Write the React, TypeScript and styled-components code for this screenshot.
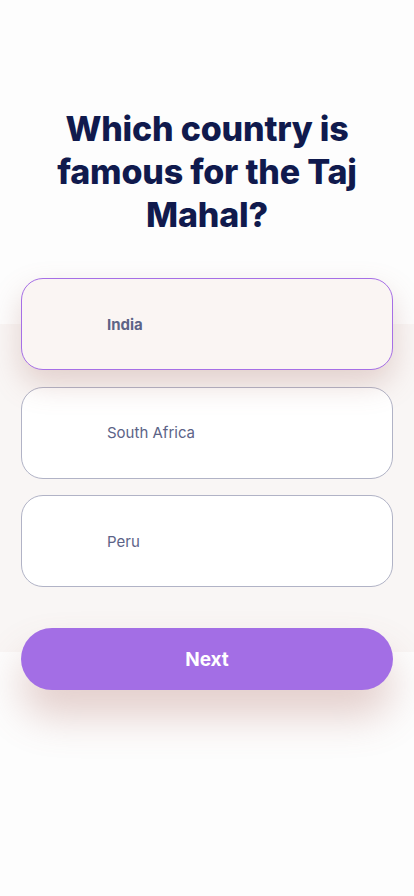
import React, { useState } from "react";
import styled, { createGlobalStyle } from "styled-components";

const Global = createGlobalStyle`
  html, body { margin: 0; padding: 0; }
  body {
    background: #fdfdfd;
    font-family: Inter, "Noto Sans", sans-serif;
    -webkit-font-smoothing: antialiased;
  }
`;

const Page = styled.div`
  min-height: 896px;
  box-sizing: border-box;
  background: linear-gradient(
    to bottom,
    #fdfdfd 0px,
    #fdfdfd 324px,
    #f9f6f5 324px,
    #f9f6f5 652px,
    #fdfdfd 652px
  );
  padding: 107px 21px 0;
  display: flex;
  flex-direction: column;
`;

const Question = styled.h1`
  margin: 0 20px;
  text-align: center;
  color: #101a4d;
  font-size: 34px;
  line-height: 43px;
  font-weight: 800;
  letter-spacing: -0.2px;
`;

const Options = styled.div`
  margin-top: 42px;
  display: flex;
  flex-direction: column;
  gap: 16.5px;
`;

const Option = styled.button<{ $selected?: boolean }>`
  all: unset;
  box-sizing: border-box;
  height: 92px;
  display: flex;
  align-items: center;
  padding-left: 85px;
  border-radius: 22px;
  border: 1px solid ${(p) => (p.$selected ? "#a66fe6" : "#b1b3c6")};
  background: ${(p) => (p.$selected ? "#faf5f3" : "#ffffff")};
  box-shadow: ${(p) =>
    p.$selected ? "0 14px 30px rgba(170, 110, 100, 0.28)" : "none"};
  color: #5c6387;
  font-size: 15px;
  font-weight: ${(p) => (p.$selected ? 700 : 400)};
  cursor: pointer;
  position: relative;
  z-index: ${(p) => (p.$selected ? 1 : 0)};
`;

const NextButton = styled.button`
  all: unset;
  box-sizing: border-box;
  margin-top: 41px;
  height: 62px;
  border-radius: 31px;
  background: #a36ee5;
  color: #ffffff;
  font-size: 19px;
  font-weight: 700;
  display: flex;
  align-items: center;
  justify-content: center;
  box-shadow: 0 26px 40px rgba(170, 100, 90, 0.3);
  cursor: pointer;
`;

const options = ["India", "South Africa", "Peru"];

export default function App() {
  const [selected, setSelected] = useState(0);
  return (
    <>
      <Global />
      <Page>
        <Question>Which country is famous for the Taj Mahal?</Question>
        <Options>
          {options.map((o, i) => (
            <Option key={o} $selected={i === selected} onClick={() => setSelected(i)}>
              {o}
            </Option>
          ))}
        </Options>
        <NextButton>Next</NextButton>
      </Page>
    </>
  );
}
